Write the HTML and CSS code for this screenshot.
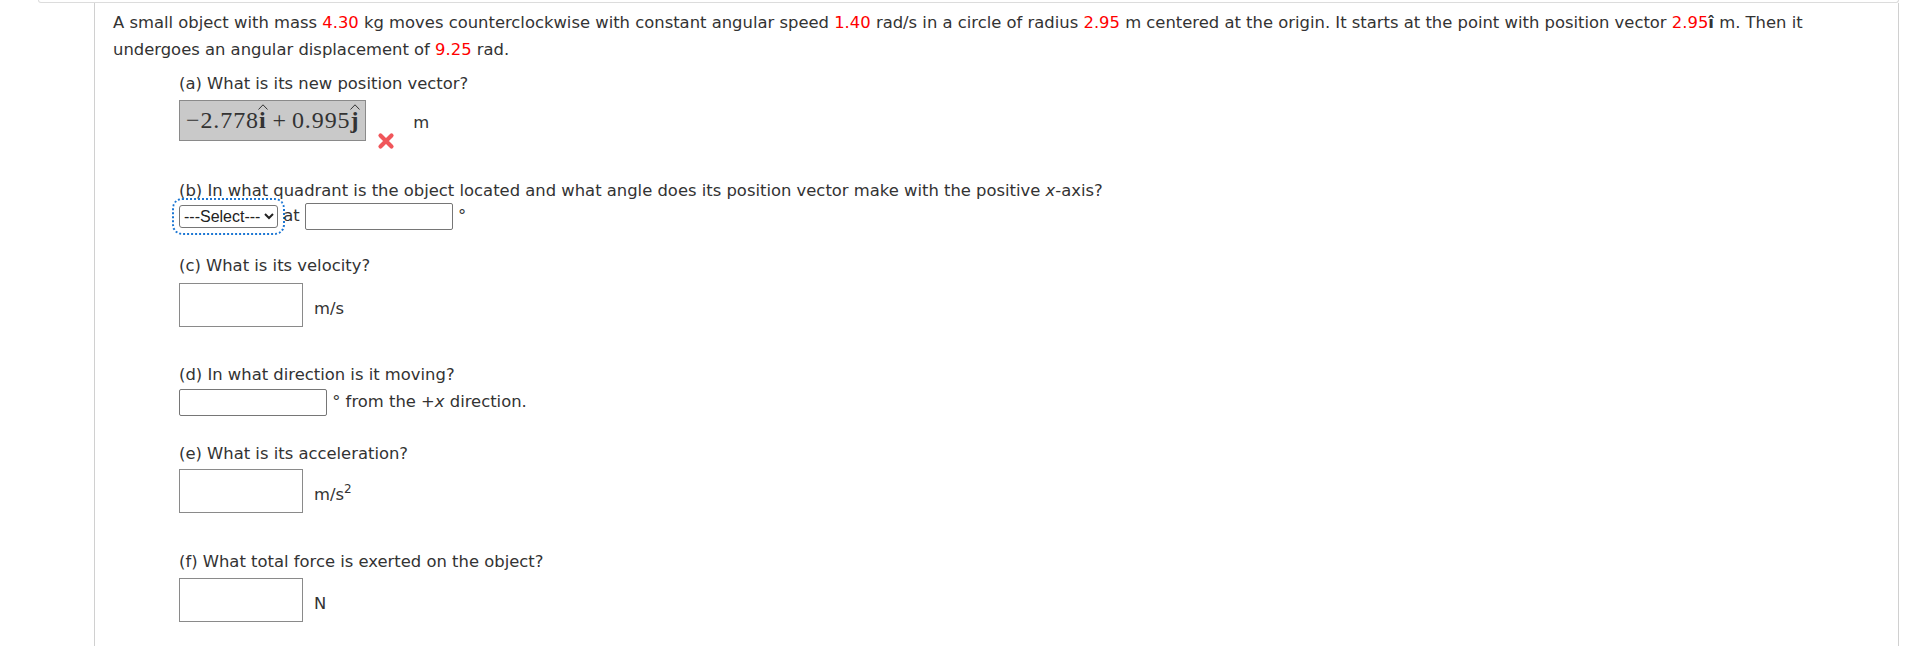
FILE: index.html
```html
<!DOCTYPE html>
<html>
<head>
<meta charset="utf-8">
<link rel="stylesheet" href="styles.css">
</head>
<body>
<div class="topbar"></div>
<div class="panel">
  <p class="intro">A small object with mass <span class="red">4.30</span> kg moves counterclockwise with constant angular speed <span class="red">1.40</span> rad/s in a circle of radius <span class="red">2.95</span> m centered at the origin. It starts at the point with position vector <span class="red">2.95</span><b>î</b> m. Then it undergoes an angular displacement of <span class="red">9.25</span> rad.</p>

  <div class="part part-a">
    <div class="q">(a) What is its new position vector?</div>
    <div class="row row-a">
      <div class="mathbox">
        <span class="mnum">−2.778</span><span class="hatted"><svg class="hat" width="10" height="6" viewBox="0 0 10 6"><polyline points="0.5,5.5 5,0.8 9.5,5.5" fill="none" stroke="#333" stroke-width="1"/></svg><b>i</b></span><span class="mop">+</span><span class="mnum">0.995</span><span class="hatted"><svg class="hat hat-j" width="10" height="6" viewBox="0 0 10 6"><polyline points="0.5,5.5 5,0.8 9.5,5.5" fill="none" stroke="#333" stroke-width="1"/></svg><b>j</b></span>
      </div>
      <svg class="wrong" width="18" height="18" viewBox="0 0 18 18"><path d="M3.5 3.5 L14.5 14.5 M14.5 3.5 L3.5 14.5" stroke="#f0565a" stroke-width="4.2" stroke-linecap="round"/></svg>
      <span class="unit-a">m</span>
    </div>
  </div>

  <div class="part part-b">
    <div class="q">(b) In what quadrant is the object located and what angle does its position vector make with the positive <i>x</i>-axis?</div>
    <div class="row-b"><select class="sel"><option>---Select---</option></select> at <input class="small-in" type="text"> °</div>
  </div>

  <div class="part part-c">
    <div class="q">(c) What is its velocity?</div>
    <div class="row row-big">
      <input class="big-in" type="text"><span class="unit">m/s</span>
    </div>
  </div>

  <div class="part part-d">
    <div class="q">(d) In what direction is it moving?</div>
    <div class="row-d"><input class="small-in" type="text"> ° from the +<i>x</i> direction.</div>
  </div>

  <div class="part part-e">
    <div class="q">(e) What is its acceleration?</div>
    <div class="row row-big">
      <input class="big-in" type="text"><span class="unit">m/s<sup>2</sup></span>
    </div>
  </div>

  <div class="part part-f">
    <div class="q">(f) What total force is exerted on the object?</div>
    <div class="row row-big">
      <input class="big-in" type="text"><span class="unit">N</span>
    </div>
  </div>
</div>
</body>
</html>
```

FILE: styles.css
```css
html, body {
  margin: 0;
  padding: 0;
  background: #fff;
}
body {
  font-family: "DejaVu Sans", Verdana, sans-serif;
  font-size: 16.4px;
  color: #333;
  overflow: hidden;
}
.topbar {
  margin-left: 38px;
  width: 1859px;
  height: 2px;
  border: 1px solid #dcdcdc;
  border-top: 0;
  border-radius: 0 0 4px 4px;
}
.panel {
  margin-left: 94px;
  width: 1785px;
  min-height: 700px;
  border-left: 1px solid #d0d0d0;
  border-right: 1px solid #d0d0d0;
  padding: 6px 0 0 18px;
}
.intro {
  margin: 0;
  line-height: 27px;
  padding-right: 10px;
}
.red { color: #f00; }
.part {
  margin-left: 66px;
}
.q {
  line-height: 25px;
}
.part-a { margin-top: 8px; }
.part-b { margin-top: 37px; }
.part-c { margin-top: 24px; }
.part-d { margin-top: 35px; }
.part-e { margin-top: 26px; }
.part-f { margin-top: 36px; }

.row-a {
  margin-top: 4px;
  display: flex;
  align-items: flex-start;
  height: 41px;
}
.mathbox {
  height: 39px;
  border: 1px solid #8a8a8a;
  background: #c9c9c9;
  padding: 0 6px 0 6px;
  display: flex;
  align-items: baseline;
  font-family: "Liberation Serif", "Times New Roman", serif;
  font-size: 24px;
  line-height: 39px;
  color: #333;
  letter-spacing: 0.9px;
}
.hatted {
  position: relative;
  display: inline-block;
}
.hat {
  position: absolute;
  left: -1px;
  top: 3px;
}
.hat-j { left: 0px; }
.mop { margin: 0 5px 0 6px; }
.wrong {
  margin-left: 11px;
  margin-top: 32px;
  flex: none;
}
.unit-a {
  margin-left: 18px;
  margin-top: 12px;
  line-height: 22px;
}

.row-b {
  height: 26px;
  line-height: 26px;
  white-space: nowrap;
}
.sel {
  width: 99px;
  height: 23px;
  font-family: "Liberation Sans", Arial, sans-serif;
  font-size: 16px;
  color: #222;
  border: 1px solid #767676;
  border-radius: 3px;
  background: #fff;
  padding: 0;
  margin: 0;
  vertical-align: middle;
  outline: 2px dotted #1b76d3;
  outline-offset: 5px;
}
.small-in {
  width: 148px;
  height: 27px;
  box-sizing: border-box;
  border: 1px solid #767676;
  border-radius: 2px;
  margin: 0;
  padding: 0;
  background: #fff;
  vertical-align: middle;
}
.row-d {
  margin-top: 1px;
  height: 27px;
  line-height: 27px;
  white-space: nowrap;
}
.row-big {
  margin-top: 5px;
  display: flex;
  align-items: center;
  height: 44px;
}
.part-e .row-big { margin-top: 3px; }
.part-f .row-big { margin-top: 4px; }
.big-in {
  width: 124px;
  height: 44px;
  box-sizing: border-box;
  border: 1px solid #8a8a8a;
  margin: 0;
  padding: 0;
  background: #fff;
}
.unit {
  margin-left: 11px;
  margin-top: 6px;
}
sup {
  font-size: 12px;
  line-height: 0;
  vertical-align: 7px;
}
```
